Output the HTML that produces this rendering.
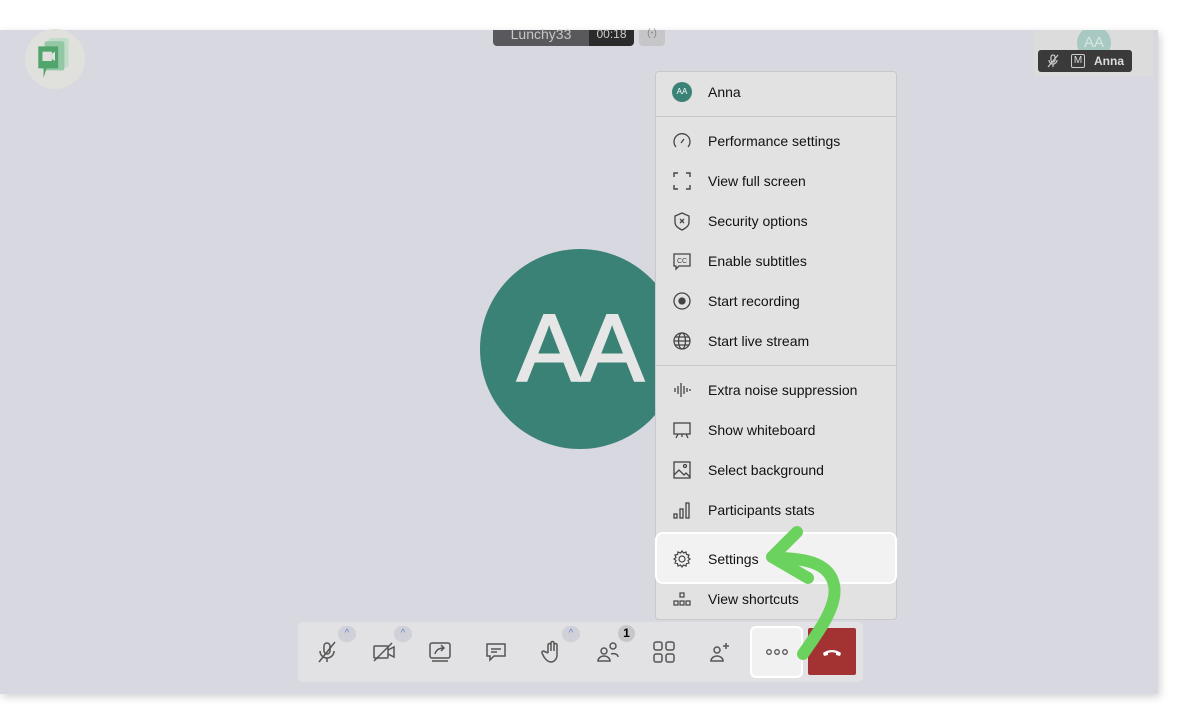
<!DOCTYPE html>
<html><head><meta charset="utf-8"><style>
*{margin:0;padding:0;box-sizing:border-box}
body{width:1188px;height:724px;background:#fff;font-family:"Liberation Sans",sans-serif;position:relative;overflow:hidden}
.main{position:absolute;left:0;top:30px;width:1158px;height:664px;background:#d8d8e0;box-shadow:2px 3px 8px rgba(0,0,0,.18)}
.abs{position:absolute}
.menu{position:absolute;left:655px;top:71px;width:242px;height:549px;background:#e2e2e2;border:1px solid #c9c9c9;border-radius:4px}
.it{position:absolute;left:0;width:240px;height:40px;display:flex;align-items:center;font-size:14px;color:#111}
.it svg{position:absolute;left:16px;width:20px;height:20px}
.it span{position:absolute;left:52px}
.div{position:absolute;left:0;width:240px;height:1px;background:#c8c8c8}
.tb svg{position:absolute;width:24px;height:24px}
.car{position:absolute;width:18px;height:16px;border-radius:8px;background:#cfd0d8;color:#6c8bd0;font-size:10px;text-align:center;line-height:16px}
</style></head><body>
<div class="main"></div>
<!-- logo -->
<div class="abs" style="left:25px;top:29px;width:60px;height:60px;border-radius:50%;background:#e0e0dd"></div>
<svg class="abs" style="left:33px;top:36px" width="44" height="48" viewBox="0 0 40 46">
<rect x="14" y="2" width="19" height="28" rx="2" fill="#bfdcc8"/>
<rect x="10" y="5" width="19" height="28" rx="2" fill="#94c7a3"/>
<path d="M4 10h19v21H12l-3 9v-9H4z" fill="#4fa56c"/>
<rect x="8" y="15" width="9" height="9" fill="#e0e0dd"/><path d="M17 17l3-2v9l-3-2z" fill="#e0e0dd"/>
</svg>
<!-- top pill -->
<div class="abs" style="left:493px;top:30px;width:96px;height:16px;background:#59585d;border-radius:0 0 0 4px;color:#c7c7c7;font-size:14px;text-align:center;line-height:8px">Lunchy33</div>
<div class="abs" style="left:589px;top:30px;width:45px;height:16px;background:#2b2b2b;border-radius:0 0 4px 0;color:#ccc;font-size:12px;text-align:center;line-height:8px">00:18</div>
<div class="abs" style="left:639px;top:30px;width:26px;height:16px;background:#c6c6c8;border-radius:0 0 4px 4px;color:#888;font-size:10px;text-align:center;line-height:8px">(ꞏ)</div>
<!-- thumb -->
<div class="abs" style="left:1034px;top:30px;width:119px;height:46px;background:#dcdcdc;overflow:hidden">
<div class="abs" style="left:43px;top:-4px;width:34px;height:34px;border-radius:50%;background:#a7c9c2;color:#d9e6e3;font-size:15px;text-align:center;line-height:34px">AA</div></div>
<div class="abs" style="left:1038px;top:50px;width:94px;height:22px;background:#3a3a3a;border-radius:3px;color:#ddd;font-size:12px;font-weight:bold">
<svg class="abs" style="left:8px;top:4px" width="14" height="14" viewBox="0 0 14 14" fill="none" stroke="#ccc" stroke-width="1.2"><rect x="5" y="1" width="4" height="7" rx="2"/><path d="M3 6a4 4 0 008 0M7 10v3M2 13L12 1"/></svg>
<div class="abs" style="left:33px;top:4px;width:14px;height:14px;border:1px solid #ccc;border-radius:2px;font-size:10px;text-align:center;line-height:12px;font-weight:normal">M</div>
<span class="abs" style="left:56px;top:4px">Anna</span></div>
<!-- avatar -->
<div class="abs" style="left:480px;top:249px;width:200px;height:200px;border-radius:50%;background:#3b8276;color:#e6e6e6;font-size:96px;text-align:center;line-height:200px;letter-spacing:-1px;-webkit-text-stroke:2px #e6e6e6">AA</div>
<!-- menu -->
<div class="menu">
<div class="it" style="top:0"><div class="abs" style="left:16px;top:10px;width:20px;height:20px;border-radius:50%;background:#3b8276;color:#fff;font-size:8px;text-align:center;line-height:20px">AA</div><span>Anna</span></div>
<div class="div" style="top:44px"></div>
<div class="it" style="top:49px"><svg viewBox="0 0 20 20" fill="none" stroke="#444" stroke-width="1.3"><path d="M4 16a8 8 0 1112 0"/><path d="M9 12l3-4"/></svg><span>Performance settings</span></div>
<div class="it" style="top:89px"><svg viewBox="0 0 20 20" fill="none" stroke="#444" stroke-width="1.4"><path d="M2 6V2h4M14 2h4v4M18 14v4h-4M6 18H2v-4"/></svg><span>View full screen</span></div>
<div class="it" style="top:129px"><svg viewBox="0 0 20 20" fill="none" stroke="#444" stroke-width="1.3"><path d="M10 2l7 3v6c0 4-3 6-7 8-4-2-7-4-7-8V5z"/><path d="M8 8l4 4M12 8l-4 4"/></svg><span>Security options</span></div>
<div class="it" style="top:169px"><svg viewBox="0 0 20 20" fill="none" stroke="#444" stroke-width="1.3"><path d="M2 3h16v12H7l-3 3v-3H2z"/><text x="5" y="12" font-size="7" fill="#444" stroke="none" font-family="Liberation Sans">CC</text></svg><span>Enable subtitles</span></div>
<div class="it" style="top:209px"><svg viewBox="0 0 20 20" fill="none" stroke="#444" stroke-width="1.3"><circle cx="10" cy="10" r="8"/><circle cx="10" cy="10" r="3" fill="#444"/></svg><span>Start recording</span></div>
<div class="it" style="top:249px"><svg viewBox="0 0 20 20" fill="none" stroke="#444" stroke-width="1.3"><circle cx="10" cy="10" r="8"/><ellipse cx="10" cy="10" rx="3.5" ry="8"/><path d="M2 10h16M3 6h14M3 14h14"/></svg><span>Start live stream</span></div>
<div class="div" style="top:293px"></div>
<div class="it" style="top:298px"><svg viewBox="0 0 20 20" fill="none" stroke="#444" stroke-width="1.3"><path d="M3 8v4M6 6v8M9 3v14M12 6v8M15 8v4M18 9v2"/></svg><span>Extra noise suppression</span></div>
<div class="it" style="top:338px"><svg viewBox="0 0 20 20" fill="none" stroke="#444" stroke-width="1.3"><rect x="2" y="3" width="16" height="11"/><path d="M6 14l-2 4M14 14l2 4M10 14v3"/></svg><span>Show whiteboard</span></div>
<div class="it" style="top:378px"><svg viewBox="0 0 20 20" fill="none" stroke="#444" stroke-width="1.3"><rect x="2" y="2" width="16" height="16"/><circle cx="13" cy="6" r="1.5"/><path d="M2 15l5-5 5 5 2-2 4 4"/></svg><span>Select background</span></div>
<div class="it" style="top:418px"><svg viewBox="0 0 20 20" fill="none" stroke="#444" stroke-width="1.3"><rect x="2" y="14" width="3" height="4"/><rect x="8" y="9" width="3" height="9"/><rect x="14" y="3" width="3" height="15"/></svg><span>Participants stats</span></div>
<div class="abs" style="left:-1px;top:460px;width:242px;height:52px;background:#f2f2f2;border:2px solid #fff;border-radius:8px"></div>
<div class="it" style="top:467px"><svg viewBox="0 0 20 20" fill="none" stroke="#444" stroke-width="1.2"><circle cx="10" cy="10" r="3"/><path d="M10 2l1.5 2 2.5-1 .5 2.5 2.5.5-1 2.5 2 1.5-2 1.5 1 2.5-2.5.5-.5 2.5-2.5-1L10 18l-1.5-2-2.5 1-.5-2.5L3 14l1-2.5L2 10l2-1.5L3 6l2.5-.5L6 3l2.5 1z"/></svg><span>Settings</span></div>
<div class="it" style="top:507px"><svg viewBox="0 0 20 20" fill="none" stroke="#444" stroke-width="1.2"><rect x="8" y="4" width="4" height="4"/><rect x="2" y="12" width="4" height="4"/><rect x="8" y="12" width="4" height="4"/><rect x="14" y="12" width="4" height="4"/></svg><span>View shortcuts</span></div>
</div>
<!-- toolbar -->
<div class="abs tb" style="left:298px;top:622px;width:565px;height:60px;background:#e2e2e4;border-radius:5px">
<svg style="left:17px;top:18px" viewBox="0 0 24 24" fill="none" stroke="#555" stroke-width="1.5"><rect x="9" y="3" width="6" height="11" rx="3"/><path d="M5 11a7 7 0 0014 0M12 18v4M4 22L20 2"/></svg>
<svg style="left:74px;top:18px" viewBox="0 0 24 24" fill="none" stroke="#555" stroke-width="1.5"><rect x="2" y="6" width="14" height="12" rx="1"/><path d="M16 10l6-3v10l-6-3M2 21L20 3"/></svg>
<svg style="left:130px;top:18px" viewBox="0 0 24 24" fill="none" stroke="#555" stroke-width="1.5"><rect x="2" y="3" width="20" height="15" rx="2"/><path d="M4 21h16M7 14c1-4 4-6 9-6M13 5l3 3-3 3"/></svg>
<svg style="left:186px;top:18px" viewBox="0 0 24 24" fill="none" stroke="#555" stroke-width="1.5"><path d="M3 4h18v12H10l-4 4v-4H3z"/><path d="M7 9h10M7 12h6"/></svg>
<svg style="left:242px;top:18px" viewBox="0 0 24 24" fill="none" stroke="#555" stroke-width="1.5"><path d="M8 13V5a1.5 1.5 0 013 0v6V3a1.5 1.5 0 013 0v8V5a1.5 1.5 0 013 0v10c0 4-3 7-6 7s-5-2-7-5l-2-4a1.5 1.5 0 012.5-1.5L8 13"/></svg>
<svg style="left:298px;top:18px" viewBox="0 0 24 24" fill="none" stroke="#555" stroke-width="1.5"><circle cx="8" cy="11" r="3"/><path d="M2 21c0-3 3-5 6-5s6 2 6 5z"/><circle cx="17" cy="6" r="3"/><path d="M15 14c3-1 7 0 7 3"/></svg>
<svg style="left:354px;top:18px" viewBox="0 0 24 24" fill="none" stroke="#555" stroke-width="1.5"><rect x="2" y="2" width="8" height="8" rx="2"/><rect x="14" y="2" width="8" height="8" rx="2"/><rect x="2" y="14" width="8" height="8" rx="2"/><rect x="14" y="14" width="8" height="8" rx="2"/></svg>
<svg style="left:410px;top:18px" viewBox="0 0 24 24" fill="none" stroke="#555" stroke-width="1.5"><circle cx="9" cy="10" r="3"/><path d="M3 21c0-3 3-5 6-5s6 2 6 5z"/><path d="M18 3v6M15 6h6"/></svg>
<div class="car" style="left:40px;top:4px">^</div>
<div class="car" style="left:96px;top:4px">^</div>
<div class="car" style="left:264px;top:4px">^</div>
<div class="abs" style="left:320px;top:3px;width:17px;height:17px;border-radius:50%;background:#c7c7c9;font-size:12px;font-weight:bold;text-align:center;line-height:17px">1</div>
<div class="abs" style="left:452px;top:4px;width:53px;height:52px;background:#f1f1f1;border:2px solid #fff;border-radius:6px">
<svg class="abs" style="left:14px;top:20px;width:22px;height:8px" viewBox="0 0 22 8" fill="none" stroke="#555" stroke-width="1.3"><circle cx="3" cy="4" r="2.3"/><circle cx="11" cy="4" r="2.3"/><circle cx="19" cy="4" r="2.3"/></svg></div>
<div class="abs" style="left:510px;top:6px;width:48px;height:47px;background:#a33333;border-radius:2px"><svg class="abs" style="left:12px;top:12px" width="24" height="24" viewBox="0 0 24 24"><path d="M3 13c5-4 13-4 18 0l-1 3-4-1v-2c-3-1-5-1-8 0v2l-4 1z" fill="#fff"/></svg></div>
</div>
<!-- green arrow -->
<svg class="abs" style="left:0;top:0" width="1188" height="724" fill="none" stroke="#6bd35d" stroke-width="12" stroke-linecap="round" stroke-linejoin="round">
<path d="M803 654C820 630 838 605 834 585C830 565 810 558 775 558"/>
<path d="M797 532L772 557L808 578"/>
</svg>
</body></html>
